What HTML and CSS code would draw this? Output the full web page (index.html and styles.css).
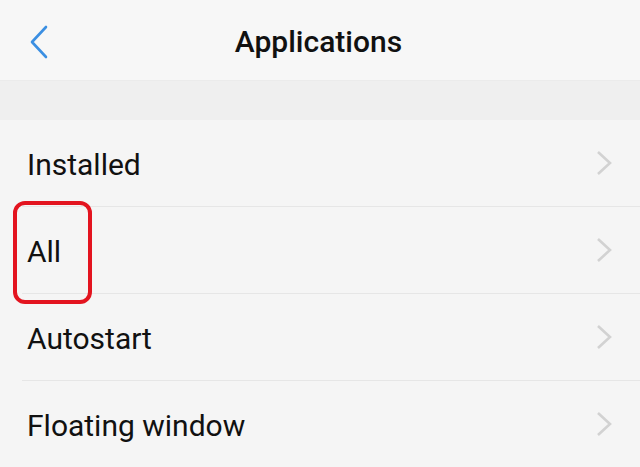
FILE: index.html
```html
<!DOCTYPE html>
<html lang="en">
<head>
    <meta charset="UTF-8">
    <meta name="viewport" content="width=device-width, initial-scale=1.0">
    <title>Applications</title>
    <link rel="stylesheet" href="styles.css">
</head>
<body>
    <div class="screen">
        <header class="topbar">
            <a class="back" href="#">
                <svg width="20" height="34" viewBox="0 0 20 34">
                    <polyline points="16,2 2,17 16,32" fill="none" stroke="#3b8fe2" stroke-width="2.6" stroke-linecap="round" stroke-linejoin="round"/>
                </svg>
            </a>
            <h1>Applications</h1>
        </header>
        <div class="spacer"></div>
        <ul class="menu">
            <li class="item">
                <span>Installed</span>
                <svg class="chev" width="18" height="28" viewBox="0 0 18 28">
                    <polyline points="3,3 15,14 3,25" fill="none" stroke="#d2d2d2" stroke-width="2.6"/>
                </svg>
            </li>
            <li class="item">
                <span>All</span>
                <svg class="chev" width="18" height="28" viewBox="0 0 18 28">
                    <polyline points="3,3 15,14 3,25" fill="none" stroke="#d2d2d2" stroke-width="2.6"/>
                </svg>
                <div class="highlight"></div>
            </li>
            <li class="item">
                <span>Autostart</span>
                <svg class="chev" width="18" height="28" viewBox="0 0 18 28">
                    <polyline points="3,3 15,14 3,25" fill="none" stroke="#d2d2d2" stroke-width="2.6"/>
                </svg>
            </li>
            <li class="item">
                <span>Floating window</span>
                <svg class="chev" width="18" height="28" viewBox="0 0 18 28">
                    <polyline points="3,3 15,14 3,25" fill="none" stroke="#d2d2d2" stroke-width="2.6"/>
                </svg>
            </li>
        </ul>
    </div>
</body>
</html>
```

FILE: styles.css
```css
* {
    margin: 0;
    padding: 0;
    box-sizing: border-box;
    font-family: Roboto, "Liberation Sans", sans-serif;
}

body {
    background: #f5f5f5;
    overflow: hidden;
}

.screen {
    width: 640px;
    height: 467px;
}

.topbar {
    height: 81px;
    background: #f7f7f7;
    border-bottom: 1px solid #ebebeb;
    display: flex;
    align-items: center;
    justify-content: center;
    position: relative;
}

.topbar h1 {
    font-size: 30px;
    font-weight: 500;
    color: #111;
    margin-left: -3px;
    margin-top: 3px;
}

.back {
    position: absolute;
    left: 30px;
    top: 25px;
    display: flex;
}

.spacer {
    height: 39px;
    background: #efefef;
}

.menu {
    list-style: none;
    background: #f5f5f5;
}

.item {
    height: 87px;
    margin-left: 22px;
    padding: 0 27px 0 5px;
    border-bottom: 1px solid #e6e6e6;
    display: flex;
    align-items: center;
    justify-content: space-between;
    font-size: 30px;
    color: #111;
    position: relative;
}

.item span {
    margin-top: 2px;
}

.item:last-child {
    border-bottom: none;
}

.chev {
    margin-top: -1px;
}

.highlight {
    position: absolute;
    left: -9px;
    top: -6px;
    width: 79px;
    height: 103px;
    border: 4px solid #e3141f;
    border-radius: 12px;
}
```
